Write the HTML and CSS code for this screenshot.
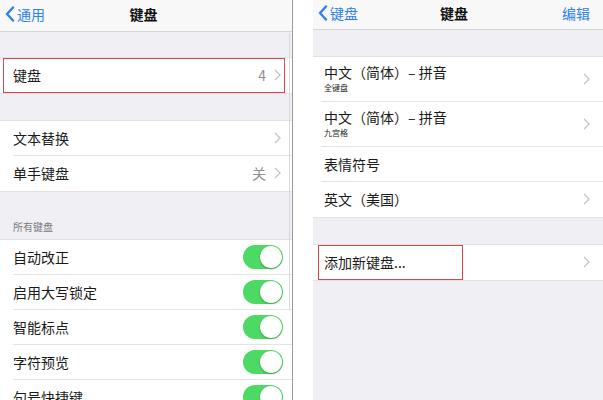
FILE: index.html
```html
<!DOCTYPE html>
<html lang="zh">
<head>
<meta charset="utf-8">
<link rel="stylesheet" href="styles.css">
</head>
<body>
<div class="screen">
  <div class="phone left">
    <div class="nav nav-left">
      <div class="back"><svg class="back-ico" viewBox="0 0 10 16" width="10" height="16"><polyline points="8,1.5 2,8 8,14.5" fill="none" stroke="#2f80ed" stroke-width="2.4" stroke-linecap="round" stroke-linejoin="round"/></svg><span>通用</span></div>
      <div class="title">键盘</div>
      <div class="nav-right"></div>
    </div>
    <div class="gap g1"></div>
    <div class="group">
      <div class="row hl-left"><span class="label">键盘</span><span class="value">4</span><svg class="chev" viewBox="0 0 7 12" width="7" height="12"><polyline points="1,1 6,6 1,11" fill="none" stroke="#c4c4c8" stroke-width="1.3"/></svg></div>
    </div>
    <div class="gap g2"></div>
    <div class="group">
      <div class="row sep"><span class="label">文本替换</span><svg class="chev" viewBox="0 0 7 12" width="7" height="12"><polyline points="1,1 6,6 1,11" fill="none" stroke="#c4c4c8" stroke-width="1.3"/></svg></div>
      <div class="row"><span class="label">单手键盘</span><span class="value">关</span><svg class="chev" viewBox="0 0 7 12" width="7" height="12"><polyline points="1,1 6,6 1,11" fill="none" stroke="#c4c4c8" stroke-width="1.3"/></svg></div>
    </div>
    <div class="gap header"><span>所有键盘</span></div>
    <div class="group">
      <div class="row sep"><span class="label">自动改正</span><span class="toggle"><span class="knob"></span></span></div>
      <div class="row sep"><span class="label">启用大写锁定</span><span class="toggle"><span class="knob"></span></span></div>
      <div class="row sep"><span class="label">智能标点</span><span class="toggle"><span class="knob"></span></span></div>
      <div class="row sep"><span class="label">字符预览</span><span class="toggle"><span class="knob"></span></span></div>
      <div class="row"><span class="label">句号快捷键</span><span class="toggle"><span class="knob"></span></span></div>
    </div>
    <div class="scrollbar"></div>
  </div>
  <div class="phone right">
    <div class="nav nav-r">
      <div class="back"><svg class="back-ico" viewBox="0 0 10 16" width="10" height="16"><polyline points="8,1.5 2,8 8,14.5" fill="none" stroke="#2f80ed" stroke-width="2.4" stroke-linecap="round" stroke-linejoin="round"/></svg><span>键盘</span></div>
      <div class="title">键盘</div>
      <div class="nav-right">编辑</div>
    </div>
    <div class="gap g3"></div>
    <div class="group">
      <div class="row tall sep r"><div class="stack"><span class="label">中文（简体）– 拼音</span><span class="sub">全键盘</span></div><svg class="chev" viewBox="0 0 7 12" width="7" height="12"><polyline points="1,1 6,6 1,11" fill="none" stroke="#c4c4c8" stroke-width="1.3"/></svg></div>
      <div class="row tall sep r"><div class="stack"><span class="label">中文（简体）– 拼音</span><span class="sub">九宫格</span></div><svg class="chev" viewBox="0 0 7 12" width="7" height="12"><polyline points="1,1 6,6 1,11" fill="none" stroke="#c4c4c8" stroke-width="1.3"/></svg></div>
      <div class="row sep r"><span class="label">表情符号</span></div>
      <div class="row r"><span class="label">英文（美国）</span><svg class="chev" viewBox="0 0 7 12" width="7" height="12"><polyline points="1,1 6,6 1,11" fill="none" stroke="#c4c4c8" stroke-width="1.3"/></svg></div>
    </div>
    <div class="gap g4"></div>
    <div class="group">
      <div class="row r hl-right"><span class="label">添加新键盘...</span><svg class="chev" viewBox="0 0 7 12" width="7" height="12"><polyline points="1,1 6,6 1,11" fill="none" stroke="#c4c4c8" stroke-width="1.3"/></svg></div>
    </div>
  </div>
</div>
</body>
</html>
```

FILE: styles.css
```css
html, body {
  margin: 0;
  padding: 0;
  background: #ffffff;
}
body {
  width: 603px;
  height: 400px;
  overflow: hidden;
  font-family: "Noto Sans CJK SC", "Noto Sans", "Liberation Sans", sans-serif;
  color: #1a1a1a;
}
.screen {
  display: flex;
  height: 400px;
  gap: 20px;
}
.phone {
  position: relative;
  background: #efeff4;
  height: 400px;
  overflow: hidden;
}
.phone.left {
  width: 292px;
  border-right: 1px solid #9a9a9a;
}
.phone.right {
  flex: 1;
}
.nav {
  display: flex;
  align-items: center;
  justify-content: space-between;
  background: #f8f8f8;
  border-bottom: 1px solid #d6d6da;
  box-sizing: border-box;
}
.nav-left {
  height: 32px;
  padding: 0 10px 3px 5px;
}
.nav-r {
  height: 30px;
  padding: 0 13px 3px 5px;
}
.back {
  display: flex;
  align-items: center;
  gap: 2px;
  color: #2f80ed;
  font-size: 14px;
  width: 60px;
}
.back-ico {
  display: block;
}
.title {
  font-size: 14px;
  font-weight: 700;
  color: #111;
}
.nav-right {
  width: 60px;
  text-align: right;
  color: #2f80ed;
  font-size: 14px;
}
.gap.g1 { height: 26px; }
.gap.g2 { height: 28px; }
.gap.g3 { height: 27px; }
.gap.g4 { height: 28px; }
.gap.header {
  height: 49px;
  display: flex;
  align-items: flex-end;
  padding: 0 0 6px 13px;
  box-sizing: border-box;
  font-size: 10px;
  color: #7a7a80;
}
.group {
  background: #ffffff;
  box-shadow: 0 -1px 0 #e2e2e6, 0 1px 0 #e2e2e6;
}
.row {
  position: relative;
  display: flex;
  align-items: center;
  height: 35px;
  padding: 0 11px 2px 13px;
  box-sizing: border-box;
  font-size: 14px;
}
.row.r {
  padding: 0 13px 2px 11px;
}
.row.tall {
  height: 45px;
}
.row.sep::before {
  content: "";
  position: absolute;
  left: 13px;
  right: 0;
  bottom: 0;
  height: 1px;
  background: #e4e4e8;
}
.row.r.sep::before {
  left: 8px;
}
.label {
  flex: 1;
  color: #1a1a1a;
}
.stack {
  flex: 1;
  display: flex;
  flex-direction: column;
  line-height: 1.15;
}
.stack .label {
  flex: none;
}
.sub {
  font-size: 8px;
  color: #222;
  margin-top: 3px;
}
.value {
  color: #8e8e93;
  margin-right: 8px;
}
.chev {
  display: block;
}
.toggle {
  position: relative;
  width: 40px;
  height: 24px;
  border-radius: 12px;
  background: #4cd964;
  margin-right: -2px;
}
.knob {
  position: absolute;
  right: 1px;
  top: 1px;
  width: 22px;
  height: 22px;
  border-radius: 50%;
  background: #ffffff;
  box-shadow: 0 1px 2px rgba(0,0,0,0.3);
}
.hl-left::after {
  content: "";
  position: absolute;
  left: 3px;
  right: 7px;
  top: 0;
  bottom: 0;
  border: 1.5px solid #d9474c;
}
.hl-right::after {
  content: "";
  position: absolute;
  left: 5px;
  width: 145px;
  top: 0;
  bottom: 0;
  border: 1.5px solid #d9474c;
  box-sizing: border-box;
}
.scrollbar {
  position: absolute;
  right: 2px;
  top: 33px;
  width: 1px;
  height: 277px;
  background: #d8d8dc;
}
```
